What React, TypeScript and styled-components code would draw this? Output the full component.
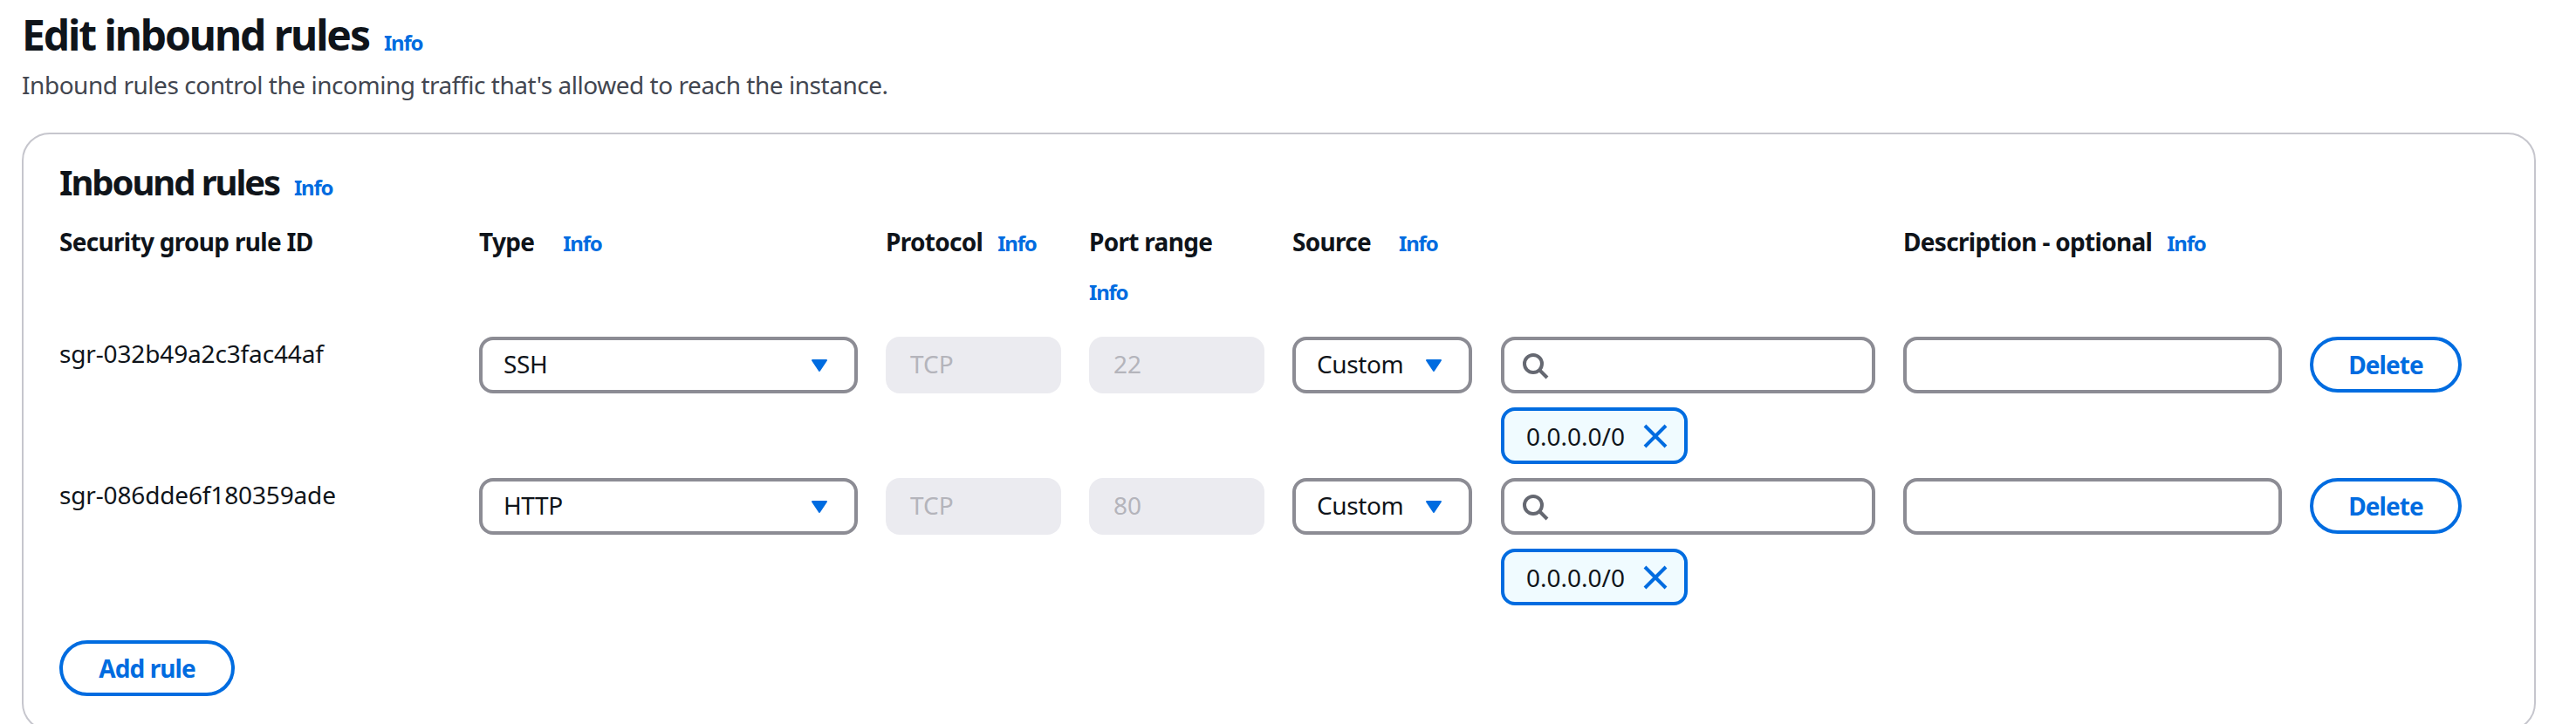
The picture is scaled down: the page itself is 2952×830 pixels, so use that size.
import React from "react";
import styled, { createGlobalStyle } from "styled-components";

const GlobalStyle = createGlobalStyle`
  html, body {
    margin: 0;
    padding: 0;
    height: 830px;
    overflow: hidden;
    background: #ffffff;
    color: #0f141a;
    font-family: "Noto Sans", "Open Sans", sans-serif;
  }
  * {
    box-sizing: border-box;
  }
`;

const Page = styled.div`
  padding: 10px 46px 0 25px;
`;

const PageTitle = styled.div`
  display: flex;
  align-items: baseline;
  gap: 17px;
  h1 {
    margin: 0;
    font-size: 48px;
    line-height: 60px;
    font-weight: 700;
    letter-spacing: -2.1px;
  }
`;

const PageDescription = styled.p`
  margin: 7px 0 35px;
  font-size: 28px;
  line-height: 40px;
  letter-spacing: -0.46px;
  color: #424650;
`;

const Card = styled.section`
  border: 2px solid #c6c6cd;
  border-radius: 32px;
  padding: 33px 41px 38px;
`;

const CardTitle = styled.div`
  display: flex;
  align-items: baseline;
  gap: 17px;
  margin-bottom: 26px;
  h2 {
    margin: 0;
    font-size: 40px;
    line-height: 44px;
    font-weight: 700;
    letter-spacing: -2.1px;
  }
`;

const InfoLink = styled.a`
  font-size: 24px;
  line-height: 32px;
  font-weight: 700;
  letter-spacing: -1.2px;
  color: #006ce0;
`;

const RulesGrid = styled.div`
  display: grid;
  grid-template-columns: 449px 434px 201px 201px 668px 434px 174px;
  column-gap: 32px;
  row-gap: 16px;
`;

const HeaderCell = styled.div<{ $gap: number }>`
  display: flex;
  flex-wrap: wrap;
  align-items: baseline;
  column-gap: ${(p) => p.$gap}px;
  row-gap: 22px;
  margin-bottom: 19px;
  font-size: 28px;
  line-height: 40px;
  font-weight: 700;
  letter-spacing: -0.7px;
`;

const RuleId = styled.div`
  font-size: 28px;
  line-height: 39px;
  letter-spacing: -0.15px;
`;

const fieldBase = `
  height: 65px;
  border-radius: 16px;
  font-size: 28px;
  line-height: 40px;
  display: flex;
  align-items: center;
`;

const Select = styled.div`
  ${fieldBase}
  border: 4px solid #8c8c94;
  padding: 0 24px;
  justify-content: space-between;
  letter-spacing: -0.4px;
`;

const SelectText = styled.span`
  margin-top: -3px;
`;

const Disabled = styled.div`
  ${fieldBase}
  background: #ebebf0;
  color: #b4b4bb;
  padding: 0 28px 3px;
`;

const TextField = styled.div`
  ${fieldBase}
  border: 4px solid #8c8c94;
  padding: 0 19px;
`;

const SourceCell = styled.div`
  display: flex;
  flex-direction: column;
  gap: 16px;
`;

const SourceRow = styled.div`
  display: grid;
  grid-template-columns: 206px 1fr;
  column-gap: 33px;
`;

const Token = styled.div`
  ${fieldBase}
  margin-left: 239px;
  width: 214px;
  border: 4px solid #006ce0;
  background: #f0fbff;
  padding: 0 0 0 25px;
  gap: 19px;
`;

const PillButton = styled.button<{ $width: number }>`
  width: ${(p) => p.$width}px;
  height: 64px;
  border: 4px solid #006ce0;
  border-radius: 40px;
  background: #ffffff;
  color: #006ce0;
  font-family: inherit;
  font-size: 28px;
  line-height: 40px;
  font-weight: 700;
  letter-spacing: -0.9px;
  padding: 0;
`;

const AddRow = styled.div`
  margin-top: 40px;
`;

const Caret = () => (
  <svg width="32" height="32" viewBox="0 0 16 16" style={{ flexShrink: 0 }}>
    <path d="M4 5h8l-4 6-4-6z" fill="#006ce0" stroke="#006ce0" strokeWidth="1" strokeLinejoin="round" />
  </svg>
);

const SearchIcon = () => (
  <svg width="32" height="32" viewBox="0 0 16 16" fill="none" stroke="#656871" strokeWidth="2">
    <circle cx="7" cy="7" r="5" />
    <path d="m15 15-4.5-4.5" />
  </svg>
);

const CloseIcon = () => (
  <svg width="32" height="32" viewBox="0 0 16 16" fill="none" stroke="#006ce0" strokeWidth="2">
    <path d="m2 2 12 12M14 2 2 14" />
  </svg>
);

const rules = [
  { id: "sgr-032b49a2c3fac44af", type: "SSH", port: "22" },
  { id: "sgr-086dde6f180359ade", type: "HTTP", port: "80" },
];

const headers = [
  { label: "Security group rule ID", gap: 0, info: false },
  { label: "Type", gap: 33, info: true },
  { label: "Protocol", gap: 17, info: true },
  { label: "Port range", gap: 17, info: true },
  { label: "Source", gap: 32, info: true },
  { label: "Description - optional", gap: 17, info: true },
  { label: "", gap: 0, info: false },
];

export default function App() {
  return (
    <Page>
      <GlobalStyle />
      <PageTitle>
        <h1>Edit inbound rules</h1>
        <InfoLink>Info</InfoLink>
      </PageTitle>
      <PageDescription>
        Inbound rules control the incoming traffic that's allowed to reach the instance.
      </PageDescription>
      <Card>
        <CardTitle>
          <h2>Inbound rules</h2>
          <InfoLink>Info</InfoLink>
        </CardTitle>
        <RulesGrid>
          {headers.map((h) => (
            <HeaderCell key={h.label} $gap={h.gap}>
              {h.label && <span>{h.label}</span>}
              {h.info && <InfoLink>Info</InfoLink>}
            </HeaderCell>
          ))}
          {rules.map((rule) => (
            <React.Fragment key={rule.id}>
              <RuleId>{rule.id}</RuleId>
              <Select>
                <SelectText>{rule.type}</SelectText>
                <Caret />
              </Select>
              <Disabled>TCP</Disabled>
              <Disabled>{rule.port}</Disabled>
              <SourceCell>
                <SourceRow>
                  <Select>
                    <SelectText>Custom</SelectText>
                    <Caret />
                  </Select>
                  <TextField>
                    <SearchIcon />
                  </TextField>
                </SourceRow>
                <Token>
                  0.0.0.0/0
                  <CloseIcon />
                </Token>
              </SourceCell>
              <TextField />
              <PillButton $width={174}>Delete</PillButton>
            </React.Fragment>
          ))}
        </RulesGrid>
        <AddRow>
          <PillButton $width={201}>Add rule</PillButton>
        </AddRow>
      </Card>
    </Page>
  );
}
